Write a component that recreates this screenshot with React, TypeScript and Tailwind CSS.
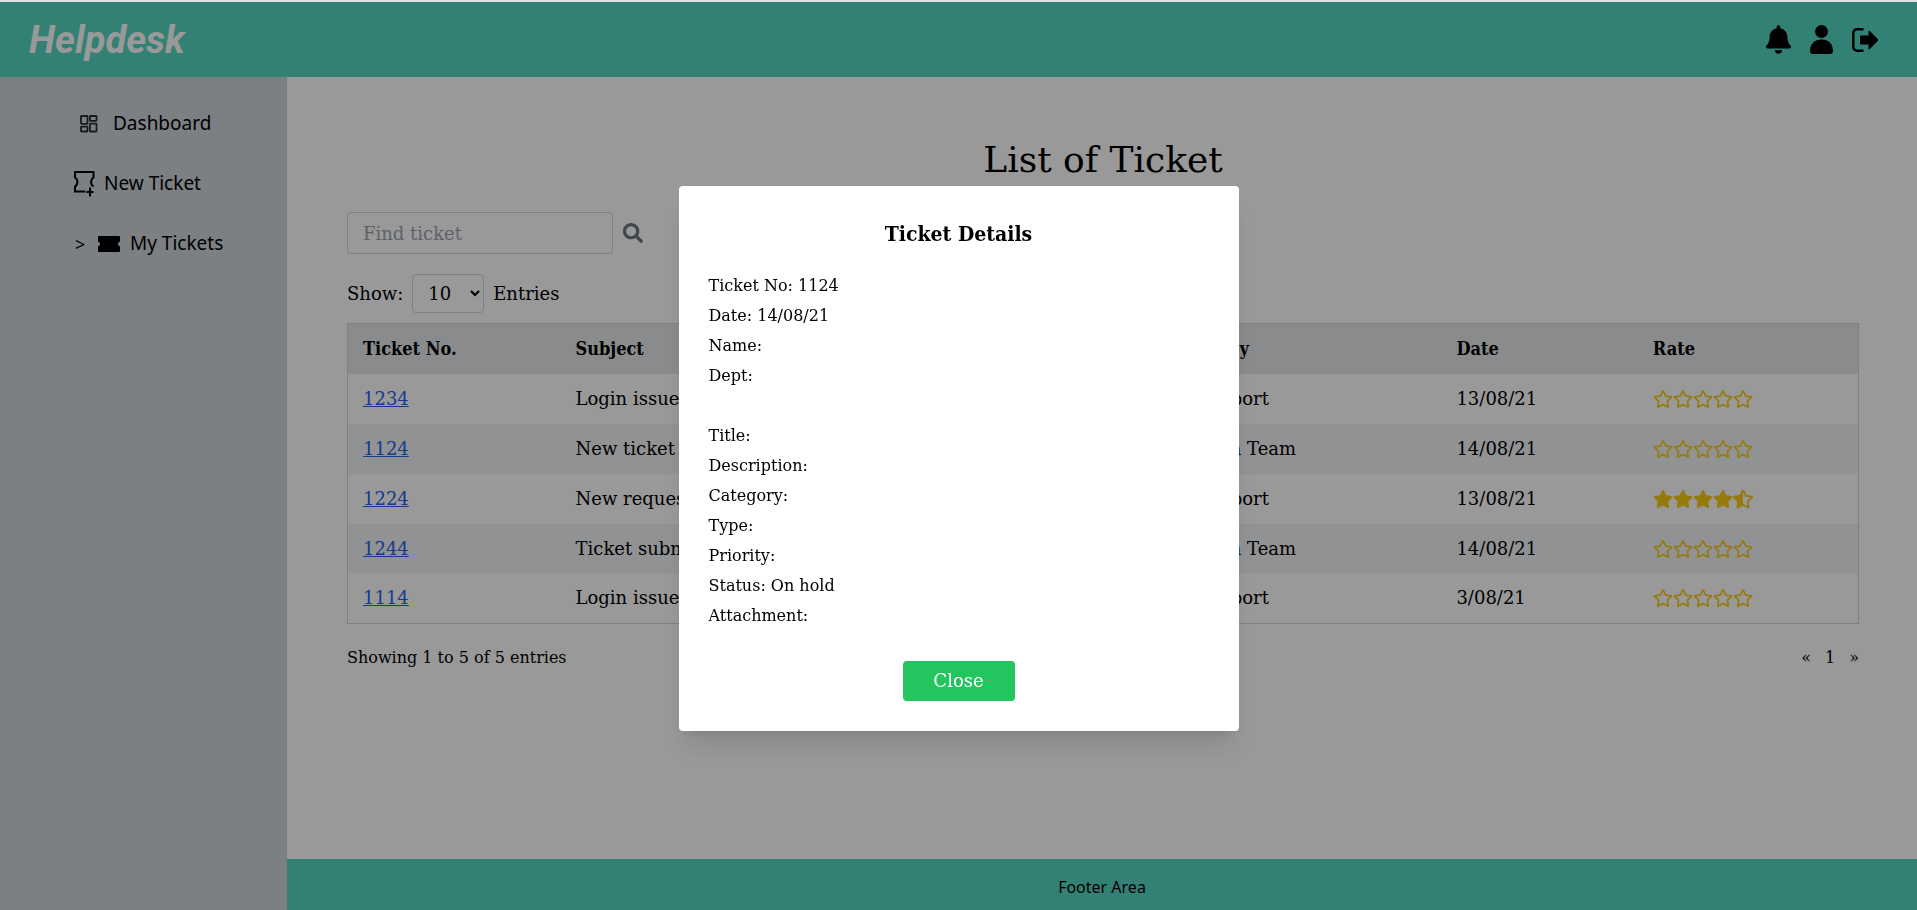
import { useState } from "react";
import { FaBell, FaRegStar, FaSearch, FaStar, FaStarHalfAlt } from "react-icons/fa";

type Ticket = {
  id: string;
  subject: string;
  status: string;
  support: string;
  date: string;
  rate: number;
};

const tickets: Ticket[] = [
  { id: "1234", subject: "Login issue", status: "In Progress", support: "Tech support", date: "13/08/21", rate: 0 },
  { id: "1124", subject: "New ticket", status: "On hold", support: "Operation Team", date: "14/08/21", rate: 0 },
  { id: "1224", subject: "New request", status: "Closed", support: "Tech support", date: "13/08/21", rate: 4.5 },
  { id: "1244", subject: "Ticket submission", status: "In Progress", support: "Operation Team", date: "14/08/21", rate: 0 },
  { id: "1114", subject: "Login issue", status: "In Progress", support: "Tech support", date: "3/08/21", rate: 0 },
];

const details = [
  "Ticket No: 1124",
  "Date: 14/08/21",
  "Name:",
  "Dept:",
  "",
  "Title:",
  "Description:",
  "Category:",
  "Type:",
  "Priority:",
  "Status: On hold",
  "Attachment:",
];

function Stars({ rate }: { rate: number }) {
  return (
    <span className="flex text-xl text-[#facc15]" role="img" aria-label={`${rate} of 5 stars`}>
      {[1, 2, 3, 4, 5].map((n) =>
        rate >= n ? <FaStar key={n} /> : rate > n - 1 ? <FaStarHalfAlt key={n} /> : <FaRegStar key={n} />,
      )}
    </span>
  );
}

function UserIcon() {
  return (
    <svg viewBox="0 0 23 29" className="h-[29px] w-[23px]" fill="currentColor">
      <circle cx="11.5" cy="6.500" r="6.500" />
      <path d="M3 29q-3 0-3-3C0 19 4.500 14.500 11.500 14.500S23 19 23 26q0 3-3 3z" />
    </svg>
  );
}

function LogoutIcon() {
  return (
    <svg viewBox="0 0 26 24" className="h-6 w-[26px]" fill="none">
      <path d="M11.500 1.300H5A3.700 3.700 0 0 0 1.300 5v14A3.700 3.700 0 0 0 5 22.700h6.500" stroke="currentColor" strokeWidth="2.500" />
      <path d="M8.500 7.500h8V3.600q0-1.600 1.200-.5l8 8q.8.900 0 1.800l-8 8q-1.200 1.100-1.200-.5v-3.900h-8q-.5 0-.5-.6V8.100q0-.6.5-.6z" fill="currentColor" />
    </svg>
  );
}

function DashboardIcon() {
  return (
    <svg viewBox="0 0 18 18" className="size-[18px]" fill="none" stroke="#2a2c2e" strokeWidth="1.800">
      <rect x="1" y="1" width="6.500" height="7.800" rx=".5" />
      <rect x="10" y="1" width="6.500" height="4.800" rx=".5" />
      <rect x="1" y="11.700" width="6.500" height="4.800" rx=".5" />
      <rect x="10" y="8.700" width="6.500" height="7.800" rx=".5" />
    </svg>
  );
}

function NewTicketIcon() {
  return (
    <svg viewBox="0 0 22 26" className="h-[26px] w-[22px]" fill="none" stroke="currentColor" strokeWidth="2">
      <path d="M11.500 20.500H1V15.500c3.200-1.800 3.200-7.200 0-9V1h18.500v5.500c-3.200 1.800-3.200 7.200 0 9" />
      <path d="M16 16.500v9M12.500 21h7" />
    </svg>
  );
}

function TicketIcon() {
  return (
    <svg viewBox="0 0 22 16" className="h-4 w-[22px]" fill="currentColor">
      <path d="M1 0h20q1 0 1 1v4.500q-2 .7-2 2.500t2 2.500V15q0 1-1 1H1q-1 0-1-1v-4.500Q2 9.800 2 8T0 5.500V1q0-1 1-1z" />
    </svg>
  );
}

export default function App() {
  const [open, setOpen] = useState(true);

  return (
    <div className="flex min-h-screen flex-col border-t-2 border-[#dfe3e6] bg-white font-['DejaVu_Serif',serif] text-lg text-black">
      <header className="flex h-[75px] items-center justify-between bg-[#55d8c1] pr-[39px] pl-[29px]">
        <a href="#home" className="pt-0.5 font-['Roboto',sans-serif] text-[38px] font-bold text-white italic">Helpdesk</a>
        <nav aria-label="Account" className="flex items-center gap-[19px]">
          <button aria-label="Notifications"><FaBell className="h-[29px] w-[25px]" /></button>
          <button aria-label="Profile"><UserIcon /></button>
          <button aria-label="Log out"><LogoutIcon /></button>
        </nav>
      </header>

      <div className="flex flex-1">
        <aside className="w-[287px] shrink-0 bg-[#d1d5db] pt-[17px] font-['Noto_Sans',sans-serif] text-[19px]">
          <nav aria-label="Main">
            <a href="#dashboard" className="flex h-[60px] items-center pl-20">
              <DashboardIcon />
              <span className="ml-[15px]">Dashboard</span>
            </a>
            <a href="#new" className="flex h-[60px] items-center pl-[74px]">
              <NewTicketIcon />
              <span className="ml-2">New Ticket</span>
            </a>
            <a href="#tickets" className="flex h-[60px] items-center pl-[75px]">
              <span className="w-[23px] text-lg">&gt;</span>
              <TicketIcon />
              <span className="ml-[10px]">My Tickets</span>
            </a>
          </nav>
        </aside>

        <div className="flex flex-1 flex-col">
          <main className="flex-1 pt-[58px] pr-[58px] pl-[60px]">
            <h1 className="text-center text-4xl leading-[50px]">List of Ticket</h1>

            <div className="mt-[27px] flex items-center">
              <input
                aria-label="Find ticket"
                placeholder="Find ticket"
                className="h-[42px] w-[266px] rounded border border-[#d1d5db] px-[15px] placeholder:text-[#9ca3af]"
              />
              <button aria-label="Search" className="ml-[10px] text-[#6b7280]"><FaSearch className="size-5" /></button>
            </div>

            <div className="mt-5 flex items-center">
              <label htmlFor="entries">Show:</label>
              <select id="entries" className="mx-[9px] h-[39px] w-[72px] rounded border border-[#d1d5db] bg-white pl-[11px]">
                <option>10</option>
                <option>25</option>
              </select>
              <span>Entries</span>
            </div>

            <table className="mt-[10px] w-full table-fixed border border-[#d1d5db] text-left">
              <colgroup>
                <col className="w-[14.1%]" />
                <col className="w-[22%]" />
                <col className="w-[16%]" />
                <col className="w-[20.3%]" />
                <col className="w-[13%]" />
                <col />
              </colgroup>
              <thead>
                <tr className="h-[50px] bg-[#e5e8ea]">
                  {["Ticket No.", "Subject", "Status", "Support by", "Date", "Rate"].map((h) => (
                    <th key={h} className="px-[15px] font-['DejaVu_Serif_Condensed','DejaVu_Serif',serif] font-bold">{h}</th>
                  ))}
                </tr>
              </thead>
              <tbody>
                {tickets.map((t) => (
                  <tr key={t.id} className="h-[50px] even:bg-[#f2f3f6]">
                    <td className="px-[15px]">
                      <button onClick={() => setOpen(true)} className="text-[#2563eb] underline">{t.id}</button>
                    </td>
                    <td className="px-[15px]">{t.subject}</td>
                    <td className="px-[15px]">{t.status}</td>
                    <td className="px-[15px]">{t.support}</td>
                    <td className="px-[15px]">{t.date}</td>
                    <td className="px-[15px]"><Stars rate={t.rate} /></td>
                  </tr>
                ))}
              </tbody>
            </table>

            <div className="mt-[22px] flex items-center justify-between text-base leading-6">
              <p>Showing 1 to 5 of 5 entries</p>
              <nav aria-label="Pages" className="flex gap-[14px]">
                <button aria-label="Previous page">«</button>
                <button>1</button>
                <button aria-label="Next page">»</button>
              </nav>
            </div>
          </main>
          <footer className="h-[51px] bg-[#55d8c1] pt-4 text-center font-['Noto_Sans',sans-serif] text-base leading-6">
            Footer Area
          </footer>
        </div>
      </div>

      {open && (
        <div className="fixed inset-x-0 top-0.5 bottom-0 flex items-center justify-center bg-black/40 pt-1">
          <section
            role="dialog"
            aria-modal="true"
            aria-labelledby="details-title"
            className="w-[560px] rounded bg-white p-[30px] shadow-xl"
          >
            <h2
              id="details-title"
              className="mb-[19px] text-center font-['DejaVu_Serif_Condensed','DejaVu_Serif',serif] text-[21px] leading-9 font-bold"
            >
              Ticket Details
            </h2>
            <div className="text-base leading-[30px]">
              {details.map((line, i) => (
                <p key={i} className="h-[30px]">{line}</p>
              ))}
            </div>
            <div className="mt-[30px] flex justify-center">
              <button onClick={() => setOpen(false)} className="h-10 w-28 rounded bg-[#22c55e] text-white">Close</button>
            </div>
          </section>
        </div>
      )}
    </div>
  );
}
